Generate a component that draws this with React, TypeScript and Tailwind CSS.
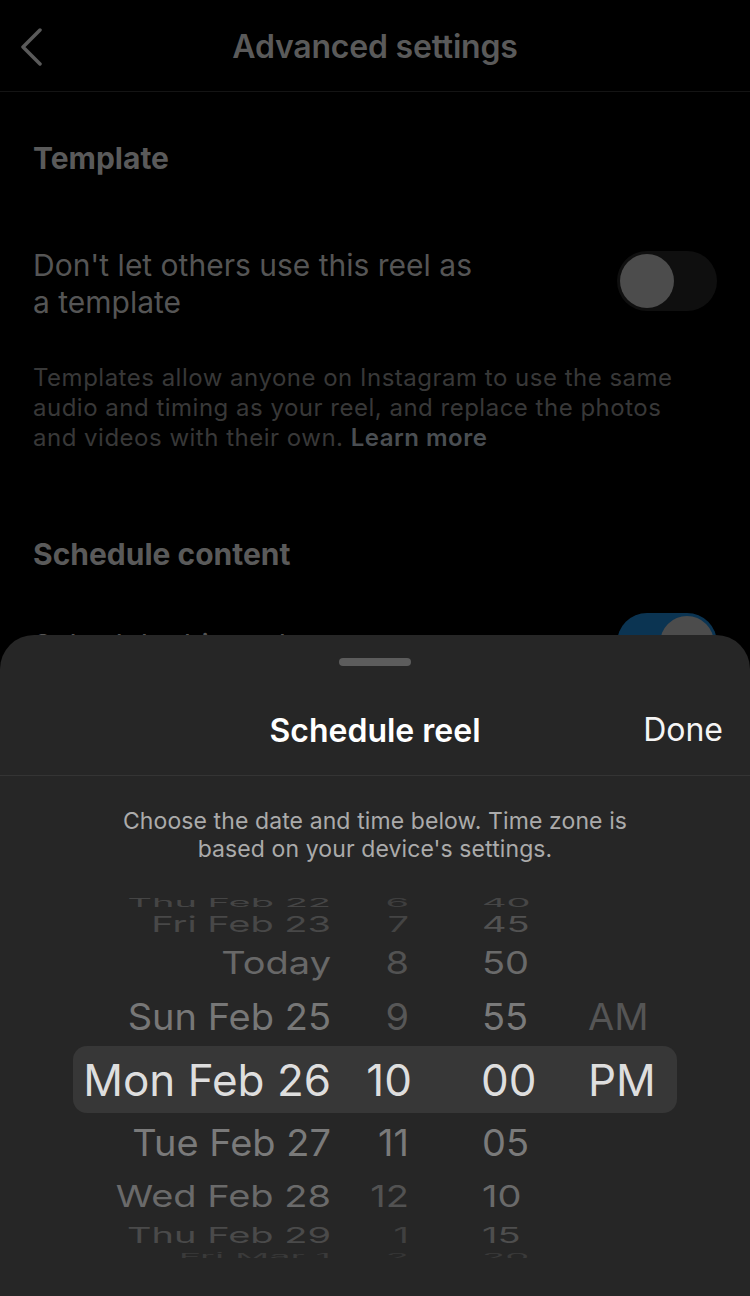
import React from "react";

type Row = {
  date: string;
  hour: string;
  min: string;
  ampm?: string;
  h: string;
  scale: string;
  dateColor: string;
  hourColor: string;
  minColor: string;
};

const rows: Row[] = [
  { date: "Thu Feb 22", hour: "6", min: "40", h: "h-[14px]", scale: "scale-y-[0.3]", dateColor: "text-[#454545]", hourColor: "text-[#3e3e3e]", minColor: "text-[#464646]" },
  { date: "Fri Feb 23", hour: "7", min: "45", h: "h-[28px]", scale: "scale-y-[0.58]", dateColor: "text-[#484848]", hourColor: "text-[#444444]", minColor: "text-[#525252]" },
  { date: "Today", hour: "8", min: "50", h: "h-[50px]", scale: "scale-y-[0.82]", dateColor: "text-[#686868]", hourColor: "text-[#525252]", minColor: "text-[#6a6a6a]" },
  { date: "Sun Feb 25", hour: "9", min: "55", ampm: "AM", h: "h-[58px]", scale: "scale-y-[0.95]", dateColor: "text-[#777777]", hourColor: "text-[#575757]", minColor: "text-[#7a7a7a]" },
];

const below: Row[] = [
  { date: "Tue Feb 27", hour: "11", min: "05", h: "h-[60px]", scale: "scale-y-[0.95]", dateColor: "text-[#7a7a7a]", hourColor: "text-[#7a7a7a]", minColor: "text-[#7a7a7a]" },
  { date: "Wed Feb 28", hour: "12", min: "10", h: "h-[46px]", scale: "scale-y-[0.8]", dateColor: "text-[#6a6a6a]", hourColor: "text-[#525252]", minColor: "text-[#6a6a6a]" },
  { date: "Thu Feb 29", hour: "1", min: "15", h: "h-[32px]", scale: "scale-y-[0.55]", dateColor: "text-[#4a4a4a]", hourColor: "text-[#404040]", minColor: "text-[#4e4e4e]" },
  { date: "Fri Mar 1", hour: "2", min: "20", h: "h-[10px]", scale: "scale-y-[0.25]", dateColor: "text-[#3a3a3a]", hourColor: "text-[#363636]", minColor: "text-[#3a3a3a]" },
];

const PickerRow = ({ r }: { r: Row }) => (
  <div className={`mx-[73px] flex items-center overflow-hidden text-[38px] leading-none ${r.h}`}>
    <div className={`w-[258px] shrink-0 text-right ${r.dateColor} ${r.scale}`}>{r.date}</div>
    <div className={`w-[81px] shrink-0 pr-[3px] text-right ${r.hourColor} ${r.scale}`}>{r.hour}</div>
    <div className={`w-[176px] shrink-0 pl-[70px] ${r.minColor} ${r.scale}`}>{r.min}</div>
    <div className={`w-[89px] shrink-0 text-[#555555] ${r.scale}`}>{r.ampm ?? ""}</div>
  </div>
);

export default function App() {
  return (
    <div className="relative h-[1296px] w-[750px] overflow-hidden bg-black font-['Inter',sans-serif]">
      {/* Header */}
      <div className="relative flex h-[92px] items-center justify-center border-b border-[#141414]">
        <svg className="absolute left-[18px] top-[28px]" width="26" height="38" viewBox="0 0 26 38">
          <path d="M22 2 L5 19 L22 36" fill="none" stroke="#5a5a5a" strokeWidth="3.5" strokeLinecap="round" strokeLinejoin="round" />
        </svg>
        <h1 className="pt-[2px] text-[32px] font-semibold tracking-[-0.2px] text-[#5a5a5a]">Advanced settings</h1>
      </div>

      {/* Template section */}
      <div className="px-[33px]">
        <h2 className="mt-[47px] text-[30px] font-bold leading-[38px] text-[#5a5a5a]">Template</h2>
        <div className="mt-[70px] flex items-start justify-between">
          <p className="w-[460px] text-[30px] leading-[37px] text-[#555555]">
            Don't let others use this reel as a template
          </p>
          <div className="mt-[4px] flex h-[60px] w-[100px] items-center rounded-full bg-[#0f0f0f] pl-[3px]">
            <div className="h-[54px] w-[54px] rounded-full bg-[#4c4c4c]" />
          </div>
        </div>
        <p className="mt-[42px] w-[660px] text-[24px] leading-[30px] tracking-[0.5px] text-[#383838]">
          Templates allow anyone on Instagram to use the same audio and timing as your reel, and replace the photos and videos with their own.{" "}
          <span className="font-semibold text-[#4a4e52]">Learn more</span>
        </p>

        <h2 className="mt-[82px] text-[30px] font-bold leading-[38px] text-[#5a5a5a]">Schedule content</h2>
        <div className="mt-[40px] flex items-start justify-between">
          <p className="pt-[14px] text-[30px] leading-[37px] text-[#555555]">Schedule this reel</p>
          <div className="flex h-[60px] w-[100px] items-center justify-end rounded-full bg-[#0b3452] pr-[3px]">
            <div className="h-[54px] w-[54px] rounded-full bg-[#4c4c4c]" />
          </div>
        </div>
      </div>

      {/* Bottom sheet */}
      <div className="absolute bottom-0 left-0 h-[661px] w-[750px] rounded-t-[34px] bg-[#262626]">
        <div className="mx-auto mt-[23px] h-[8px] w-[72px] rounded-full bg-[#5c5c5c]" />
        <div className="relative flex h-[110px] items-center justify-center border-b border-[#343434] pt-[20px]">
          <span className="text-[32px] font-semibold text-white">Schedule reel</span>
          <span className="absolute right-[27px] top-[44px] text-[32px] leading-[40px] text-[#f5f5f5]">Done</span>
        </div>
        <p className="mx-auto mt-[31px] w-[560px] text-center text-[23px] leading-[28px] tracking-[0.1px] text-[#ababab]">
          Choose the date and time below. Time zone is based on your device's settings.
        </p>

        {/* Wheel picker */}
        <div className="mt-[33px] h-[362px] overflow-hidden">
          {rows.map((r) => (
            <PickerRow key={r.date} r={r} />
          ))}
          <div className="mx-[73px] flex h-[67px] items-center rounded-[14px] bg-[#373737] text-[44px] leading-none text-[#dedede]">
            <div className="w-[258px] shrink-0 text-right">Mon Feb 26</div>
            <div className="w-[81px] shrink-0 text-right">10</div>
            <div className="w-[176px] shrink-0 pl-[69px]">00</div>
            <div className="w-[89px] shrink-0">PM</div>
          </div>
          {below.map((r) => (
            <PickerRow key={r.date} r={r} />
          ))}
        </div>
      </div>
    </div>
  );
}
